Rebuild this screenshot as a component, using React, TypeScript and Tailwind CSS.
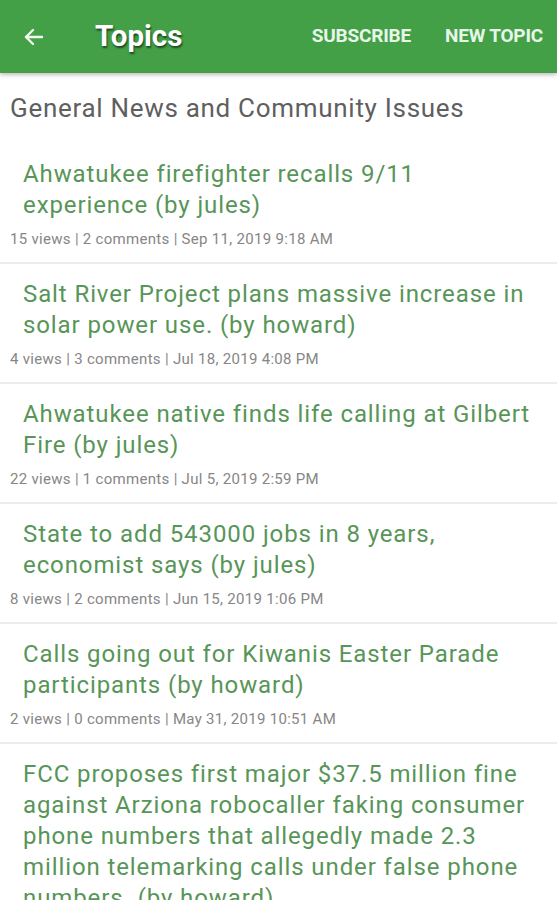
import React from "react";

const topics = [
  {
    title: "Ahwatukee firefighter recalls 9/11 experience (by jules)",
    meta: "15 views | 2 comments | Sep 11, 2019 9:18 AM",
  },
  {
    title: "Salt River Project plans massive increase in solar power use. (by howard)",
    meta: "4 views | 3 comments | Jul 18, 2019 4:08 PM",
  },
  {
    title: "Ahwatukee native finds life calling at Gilbert Fire (by jules)",
    meta: "22 views | 1 comments | Jul 5, 2019 2:59 PM",
  },
  {
    title: "State to add 543000 jobs in 8 years, economist says (by jules)",
    meta: "8 views | 2 comments | Jun 15, 2019 1:06 PM",
  },
  {
    title: "Calls going out for Kiwanis Easter Parade participants (by howard)",
    meta: "2 views | 0 comments | May 31, 2019 10:51 AM",
  },
  {
    title:
      "FCC proposes first major $37.5 million fine against Arziona robocaller faking consumer phone numbers that allegedly made 2.3 million telemarking calls under false phone numbers. (by howard)",
    meta: "1 views | 0 comments | May 20, 2019 9:12 AM",
  },
];

export default function App() {
  return (
    <div className="w-[557px] h-[900px] overflow-hidden bg-white font-['Roboto','Liberation_Sans',sans-serif]">
      <header className="relative z-10 h-[73px] bg-[#43a047] flex items-center shadow-[0_2px_4px_rgba(0,0,0,0.25)]">
        <button className="w-[70px] h-full flex items-center pl-[22px]">
          <svg width="24" height="24" viewBox="0 0 24 24" fill="none" stroke="#f1f8f1" strokeWidth="2.4" strokeLinecap="round" strokeLinejoin="round">
            <path d="M20 12H4" />
            <path d="M11 5l-7 7 7 7" />
          </svg>
        </button>
        <h1 className="ml-[25px] text-[29.5px] font-bold text-white leading-none [text-shadow:1px_2px_2px_rgba(0,0,0,0.55)]">
          Topics
        </h1>
        <div className="ml-auto flex items-center gap-[34px] pr-[14px]">
          <span className="text-[19px] font-bold text-[#e8f5e9] tracking-[-0.2px]">SUBSCRIBE</span>
          <span className="text-[19px] font-bold text-[#e8f5e9] tracking-[-0.2px]">NEW TOPIC</span>
        </div>
      </header>

      <div className="pt-[19px] pb-[20px] pl-[10px] text-[26px] leading-[32px] tracking-[0.7px] text-[#5f5f5f]">
        General News and Community Issues
      </div>

      <ul>
        {topics.map((t) => (
          <li key={t.meta} className="pt-[15px] pb-[13px] border-b-2 border-[#ececec]">
            <p className="pl-[23px] pr-[26px] text-[24px] leading-[31px] tracking-[0.9px] text-[#589558]">{t.title}</p>
            <p className="mt-[8px] pl-[10px] text-[15px] leading-5 tracking-[0.3px] text-[#868686]">{t.meta}</p>
          </li>
        ))}
      </ul>
    </div>
  );
}
